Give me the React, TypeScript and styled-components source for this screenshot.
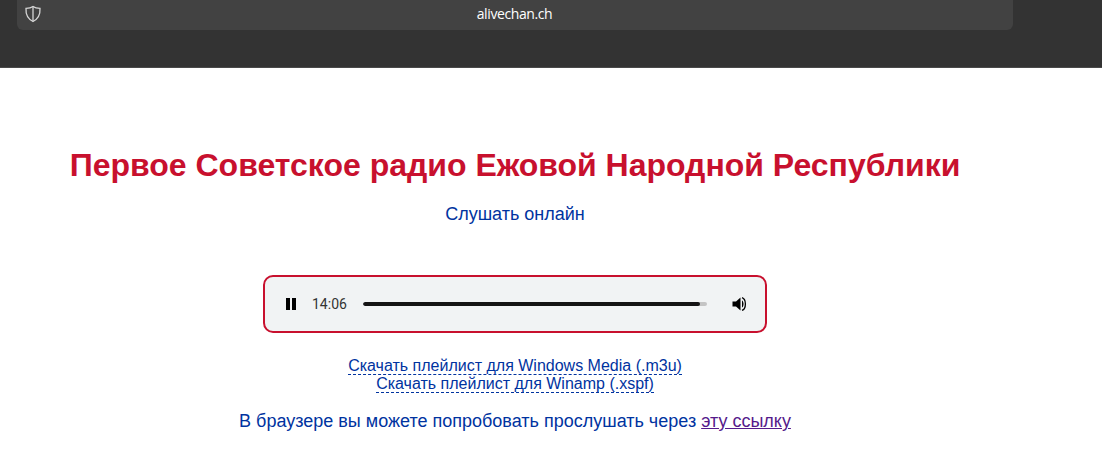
import React from "react";
import styled, { createGlobalStyle } from "styled-components";

const GlobalStyle = createGlobalStyle`
  html, body {
    margin: 0;
    padding: 0;
    background: #ffffff;
    overflow: hidden;
  }
`;

const Page = styled.div`
  width: 1102px;
  height: 463px;
  overflow: hidden;
  font-family: "Liberation Sans", Arial, sans-serif;
  color: #0033a0;
`;

const BrowserBar = styled.div`
  height: 68px;
  box-sizing: border-box;
  padding: 0 89px 0 17px;
  background: #333333;
  border-bottom: 1px solid #4a4a4a;
`;

const AddressBar = styled.div`
  height: 30px;
  box-sizing: border-box;
  padding: 5px 8px 0 7px;
  display: grid;
  grid-template-columns: 1fr auto 1fr;
  background: #424242;
  border-radius: 0 0 6px 6px;
`;

const Host = styled.span`
  font-family: "Open Sans", sans-serif;
  font-size: 14px;
  line-height: 18px;
  letter-spacing: -0.4px;
  color: #ffffff;
`;

const Content = styled.main`
  display: flex;
  flex-direction: column;
  align-items: center;
  width: 1030px;
`;

const Title = styled.h1`
  margin: 79px 0 0;
  font-size: 32px;
  line-height: 37px;
  font-weight: 700;
  color: #c8102e;
  white-space: nowrap;
`;

const Listen = styled.p`
  margin: 20px 0 0;
  font-size: 18px;
  line-height: 21px;
`;

const Player = styled.div`
  margin-top: 50px;
  width: 504px;
  height: 58px;
  box-sizing: border-box;
  display: flex;
  align-items: center;
  padding: 0 16px 0 20px;
  background: #f1f3f4;
  border: 2px solid #c8102e;
  border-radius: 10px;
`;

const PlayerIcon = styled.svg`
  flex: none;
  display: block;
`;

const Time = styled.span`
  margin-left: 15px;
  font-family: Roboto, sans-serif;
  font-size: 14px;
  line-height: 16px;
  color: #333333;
`;

const Track = styled.div`
  margin: 0 24px 0 16px;
  flex: 1;
  height: 4px;
  border-radius: 2px;
  background: #c4c4c4;
  overflow: hidden;
`;

const Progress = styled.div`
  height: 100%;
  border-radius: 2px;
  background: #141414;
`;

const Downloads = styled.div`
  margin-top: 24px;
  display: flex;
  flex-direction: column;
  align-items: center;
`;

const DownloadLink = styled.a`
  font-size: 16px;
  line-height: 18px;
  height: 17px;
  color: #0033a0;
  text-decoration: none;
  border-bottom: 1px dashed #0033a0;
  box-sizing: content-box;
`;

const Note = styled.p`
  margin: 18px 0 0;
  font-size: 18px;
  line-height: 21px;
`;

const VisitedLink = styled.a`
  color: #551a8b;
  text-decoration: underline;
`;

const ShieldIcon = () => (
  <PlayerIcon width="18" height="18" viewBox="0 0 18 18" fill="none" stroke="#d6d6d6" strokeWidth="1.3">
    <path d="M9 1.5 C11 3 13.5 3.4 16 3.4 C16.4 9.5 14 14 9 16.5 C4 14 1.6 9.5 2 3.4 C4.5 3.4 7 3 9 1.5 Z" />
    <path d="M9 1.5 V16.5" />
  </PlayerIcon>
);

const PauseIcon = () => (
  <PlayerIcon width="12" height="14" viewBox="0 0 12 14" fill="#000000">
    <rect x="1" y="1" width="4" height="12" />
    <rect x="7" y="1" width="4" height="12" />
  </PlayerIcon>
);

const VolumeIcon = () => (
  <PlayerIcon width="18" height="18" viewBox="0 0 18 18" fill="#000000">
    <path d="M1.5 6.5 H5 L9.5 2.5 V15.5 L5 11.5 H1.5 Z" />
    <path d="M11 5.5 C13 6.5 13 11.5 11 12.5 Z" />
    <path d="M11 2.6 C15.5 4 15.5 14 11 15.4" fill="none" stroke="#000000" strokeWidth="1.3" />
  </PlayerIcon>
);

const App = () => {
  return (
    <Page>
      <GlobalStyle />
      <BrowserBar>
        <AddressBar>
          <ShieldIcon />
          <Host>alivechan.ch</Host>
        </AddressBar>
      </BrowserBar>
      <Content>
        <Title>Первое Советское радио Ежовой Народной Республики</Title>
        <Listen>Слушать онлайн</Listen>
        <Player>
          <PauseIcon />
          <Time>14:06</Time>
          <Track>
            <Progress style={{ width: "98%" }} />
          </Track>
          <VolumeIcon />
        </Player>
        <Downloads>
          <DownloadLink href="#">Скачать плейлист для Windows Media (.m3u)</DownloadLink>
          <DownloadLink href="#">Скачать плейлист для Winamp (.xspf)</DownloadLink>
        </Downloads>
        <Note>
          В браузере вы можете попробовать прослушать через{" "}
          <VisitedLink href="#">эту ссылку</VisitedLink>
        </Note>
      </Content>
    </Page>
  );
};

export default App;
